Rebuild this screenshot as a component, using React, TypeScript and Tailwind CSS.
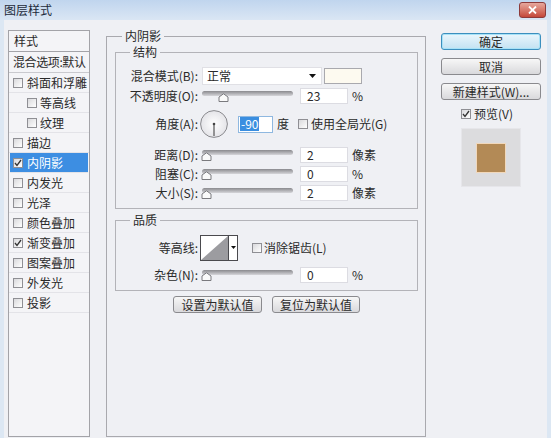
import React from "react";

const layerStyles = [
  { name: "斜面和浮雕" },
  { name: "等高线", indent: true },
  { name: "纹理", indent: true },
  { name: "描边" },
  { name: "内阴影", checked: true, active: true },
  { name: "内发光" },
  { name: "光泽" },
  { name: "颜色叠加" },
  { name: "渐变叠加", checked: true },
  { name: "图案叠加" },
  { name: "外发光" },
  { name: "投影" },
];

function Check({ checked = false }: { checked?: boolean }) {
  return (
    <span className="flex h-[10px] w-[10px] shrink-0 items-center justify-center border border-[#8f8f94] bg-linear-to-br from-[#d9d9dc] to-white">
      {checked && (
        <svg width="8" height="8" viewBox="0 0 8 8">
          <path d="M1 4 L3 6.5 L7 1" fill="none" stroke="#333" strokeWidth="1.3" />
        </svg>
      )}
    </span>
  );
}

function Slider({ pos }: { pos: number }) {
  return (
    <span className="relative ml-[4px] block h-[12px] w-[91px] shrink-0">
      <span className="absolute left-0 right-0 top-[1px] h-[5px] rounded-full bg-linear-to-b from-[#8a8a8e] to-[#d6d6da]" />
      <svg className="absolute top-[3px]" style={{ left: pos - 5 }} width="11" height="9" viewBox="0 0 11 9">
        <path d="M1 8.5 V4 L5.5 0.8 L10 4 V8.5 Z" fill="#fafafa" stroke="#7a7a7e" strokeWidth="1" />
      </svg>
    </span>
  );
}

function Field({ value }: { value: string }) {
  return (
    <span className="ml-[7px] flex h-[16px] w-[48px] shrink-0 items-center border border-[#dcdce2] bg-white pl-[6px]">
      {value}
    </span>
  );
}

function Label({ text }: { text: string }) {
  return <span className="w-[82px] shrink-0 whitespace-nowrap text-right">{text}</span>;
}

function SliderRow({ label, pos, value, unit }: { label: string; pos: number; value: string; unit: string }) {
  return (
    <div className="flex h-[19px] items-center">
      <Label text={label} />
      <Slider pos={pos} />
      <Field value={value} />
      <span className="ml-[4px]">{unit}</span>
    </div>
  );
}

function Button({ text, primary = false }: { text: string; primary?: boolean }) {
  return (
    <button
      className={
        primary
          ? "flex h-[17px] w-[100px] items-center justify-center rounded-[3px] border border-[#3c8fbe] bg-linear-to-b from-[#eaf6fc] to-[#c3e2f2] shadow-[inset_0_0_0_1px_#a8e2f7]"
          : "flex h-[17px] w-[100px] items-center justify-center rounded-[3px] border border-[#8a8a8e] bg-linear-to-b from-[#f7f7f7] to-[#d9d9dc]"
      }
    >
      {text}
    </button>
  );
}

export default function App() {
  return (
    <div className="h-[438px] w-[551px] overflow-hidden bg-[#eff0f4] font-['Noto_Sans_CJK_SC',sans-serif] text-[12px] leading-[14px] text-[#2a2a2a]">
      {/* title bar */}
      <div className="flex h-[20px] items-start bg-linear-to-b from-[#c0d5ee] to-[#dae6f4]">
        <span className="ml-[4px] mt-[3px] text-[#1d2a3a]">图层样式</span>
        <span className="ml-auto mr-[5px] mt-[2px] flex h-[16px] w-[27px] items-center justify-center rounded-[3px] border border-[#8d3b3b] bg-linear-to-b from-[#e6a79d] to-[#c4473a]">
          <svg width="9" height="8" viewBox="0 0 9 8">
            <path d="M1 0.5 L8 7.5 M8 0.5 L1 7.5" stroke="#fff" strokeWidth="1.8" />
          </svg>
        </span>
      </div>

      <div className="flex h-[418px] items-start border-x-[4px] border-[#dce7f3] pl-[4px]">
        {/* style list */}
        <div className="mt-[10px] h-[407px] w-[82px] shrink-0 overflow-hidden border border-[#a3a3a8] bg-[#f4f4f7]">
          <div className="flex h-[21px] items-center border-b border-[#a3a3a8] pl-[5px]">样式</div>
          <div className="flex h-[21px] items-center whitespace-nowrap border-b border-[#c9c9ce] pl-[4px] tracking-[-0.4px]">
            混合选项:默认
          </div>
          {layerStyles.map((s) => (
            <div
              key={s.name}
              className={
                s.active
                  ? "mx-px flex h-[20px] items-center gap-[4px] whitespace-nowrap border-b border-[#e3e3e8] bg-[#3d8ee2] pl-[3px] text-white"
                  : s.indent
                  ? "flex h-[20px] items-center gap-[3px] whitespace-nowrap border-b border-[#e3e3e8] pl-[18px]"
                  : "flex h-[20px] items-center gap-[4px] whitespace-nowrap border-b border-[#e3e3e8] pl-[4px]"
              }
            >
              <Check checked={s.checked} />
              <span>{s.name}</span>
            </div>
          ))}
        </div>

        {/* inner shadow settings */}
        <fieldset className="ml-[16px] mt-[9px] h-[408px] w-[320px] shrink-0 border border-[#a9a9ae] pl-[8px] pr-[7px]">
          <legend className="ml-[7px] px-[3px]">内阴影</legend>

          <fieldset className="mt-[2px] border border-[#b3b3b8] pb-[6px]">
            <legend className="ml-[14px] px-[3px]">结构</legend>
            <div className="mt-[8px] flex h-[18px] items-center">
              <Label text="混合模式(B):" />
              <span className="ml-[4px] flex h-[18px] w-[120px] shrink-0 items-center border border-[#e0e0e5] bg-white pl-[4px]">
                正常
                <svg className="ml-auto mr-[5px]" width="7" height="4" viewBox="0 0 7 4">
                  <path d="M0 0 H7 L3.5 4 Z" fill="#111" />
                </svg>
              </span>
              <span className="ml-[2px] h-[16px] w-[38px] shrink-0 border border-[#a9a9ae] bg-[#fdfaf0]" />
            </div>
            <div className="mt-[2px] flex h-[18px] items-center">
              <Label text="不透明度(O):" />
              <Slider pos={21} />
              <Field value="23" />
              <span className="ml-[4px]">%</span>
            </div>
            <div className="mt-[5px] flex h-[28px] items-center">
              <Label text="角度(A):" />
              <svg className="ml-[2px] shrink-0" width="28" height="28" viewBox="0 0 28 28">
                <defs>
                  <radialGradient id="dial" cx="50%" cy="50%" r="50%">
                    <stop offset="0%" stopColor="#ffffff" />
                    <stop offset="100%" stopColor="#e4e4e8" />
                  </radialGradient>
                </defs>
                <circle cx="14" cy="14" r="13.4" fill="url(#dial)" stroke="#8a8a8e" strokeWidth="1" />
                <line x1="14" y1="14" x2="14" y2="26" stroke="#555" strokeWidth="1.2" />
                <circle cx="14" cy="14" r="1.3" fill="#444" />
              </svg>
              <span className="ml-[10px] flex h-[17px] w-[35px] shrink-0 items-center border border-[#8fb8e0] bg-white pl-px">
                <span className="bg-[#3a8ee0] px-px text-white">-90</span>
              </span>
              <span className="ml-[4px]">度</span>
              <span className="ml-[9px]">
                <Check />
              </span>
              <span className="ml-[3px] whitespace-nowrap">使用全局光(G)</span>
            </div>
            <div className="mt-[7px]">
              <SliderRow label="距离(D):" pos={4} value="2" unit="像素" />
              <SliderRow label="阻塞(C):" pos={4} value="0" unit="%" />
              <SliderRow label="大小(S):" pos={4} value="2" unit="像素" />
            </div>
          </fieldset>

          <fieldset className="mt-[4px] border border-[#b3b3b8] pb-[6px]">
            <legend className="ml-[14px] px-[3px]">品质</legend>
            <div className="mt-[8px] flex h-[26px] items-center">
              <Label text="等高线:" />
              <svg className="ml-[2px] shrink-0" width="38" height="26" viewBox="0 0 38 26">
                <rect x="0.5" y="0.5" width="37" height="25" fill="#fff" stroke="#4a4a4e" />
                <path d="M1 25 L28 1 V25 Z" fill="#9c9ca0" />
                <line x1="28.5" y1="1" x2="28.5" y2="25" stroke="#4a4a4e" />
                <path d="M31 11 H36 L33.5 14 Z" fill="#111" />
              </svg>
              <span className="ml-[14px]">
                <Check />
              </span>
              <span className="ml-[2px] whitespace-nowrap">消除锯齿(L)</span>
            </div>
            <div className="mt-[4px]">
              <SliderRow label="杂色(N):" pos={4} value="0" unit="%" />
            </div>
          </fieldset>

          <div className="mt-[5px] flex justify-center gap-[10px]">
            <button className="flex h-[17px] w-[89px] items-center justify-center rounded-[3px] border border-[#8a8a8e] bg-linear-to-b from-[#f7f7f7] to-[#d9d9dc]">
              设置为默认值
            </button>
            <button className="flex h-[17px] w-[88px] items-center justify-center rounded-[3px] border border-[#8a8a8e] bg-linear-to-b from-[#f7f7f7] to-[#d9d9dc]">
              复位为默认值
            </button>
          </div>
        </fieldset>

        {/* right column */}
        <div className="ml-[15px] mt-[13px] flex w-[100px] shrink-0 flex-col">
          <Button text="确定" primary />
          <div className="mt-[8px]">
            <Button text="取消" />
          </div>
          <div className="mt-[8px]">
            <Button text="新建样式(W)..." />
          </div>
          <div className="mt-[7px] flex h-[14px] items-center gap-[3px] pl-[20px]">
            <Check checked />
            <span>预览(V)</span>
          </div>
          <div className="ml-[20px] mt-[7px] flex h-[59px] w-[60px] items-center justify-center border border-[#e6e6ea] bg-[#dcdcde]">
            <span className="h-[30px] w-[30px] border border-[#f1d8bb] bg-[#b38a56]" />
          </div>
        </div>
      </div>
    </div>
  );
}
